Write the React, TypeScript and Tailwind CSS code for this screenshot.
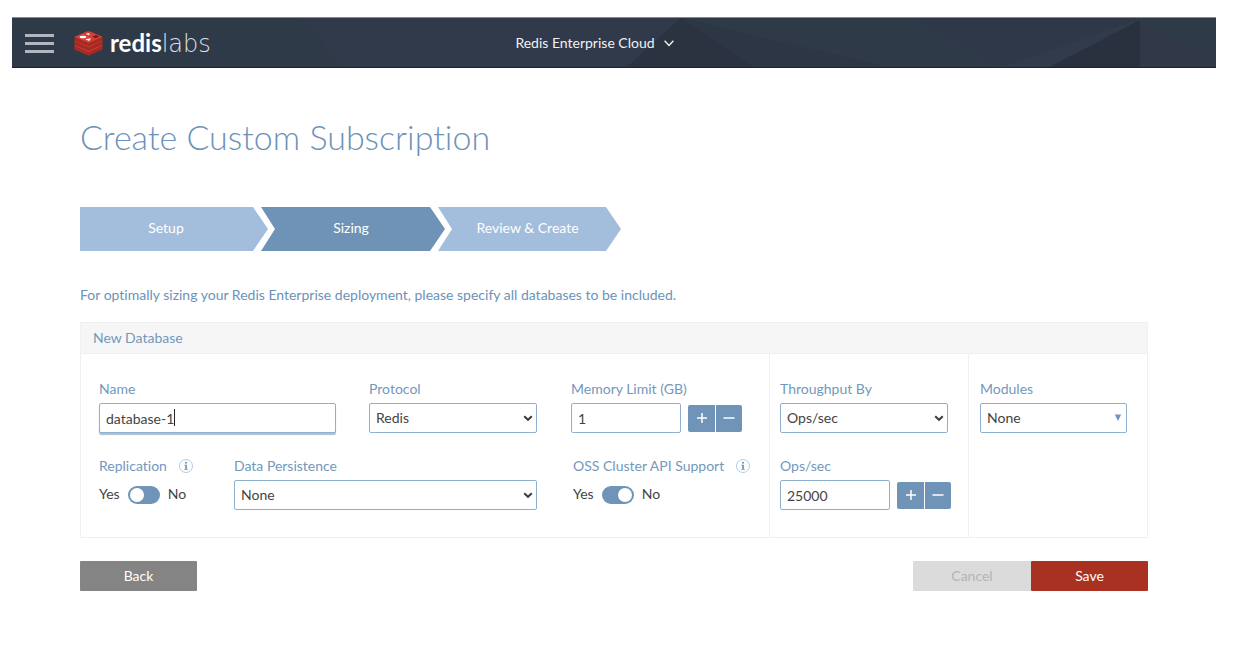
import { useState, type ReactNode } from "react";

const controlClass =
  "h-[30px] w-full rounded-[2px] border border-[#8fb0cf] bg-white px-[6px] text-[14px] leading-5 text-[#444] outline-none";

function InfoIcon({ label }: { label: string }) {
  return (
    <svg role="img" aria-label={label} className="h-[14px] w-[14px] shrink-0" viewBox="0 0 14 14" fill="none">
      <circle cx="7" cy="7" r="6.5" stroke="#b4cae0" />
      <circle cx="7" cy="3.8" r="1.05" fill="#6a93b8" />
      <path d="M5.3 5.8H7.9V10H8.9V10.8H5.2V10H6.2V6.6H5.3Z" fill="#6a93b8" />
    </svg>
  );
}

function Field({ id, label, info, className, children }: { id: string; label: string; info?: string; className: string; children: ReactNode }) {
  return (
    <div className={className}>
      <div className="mb-1 flex h-5 items-center gap-3">
        <label htmlFor={id} className="whitespace-nowrap text-[#7398bc]">
          {label}
        </label>
        {info && <InfoIcon label={info} />}
      </div>
      {children}
    </div>
  );
}

function Select({ id, options, triangle = false }: { id: string; options: string[]; triangle?: boolean }) {
  return (
    <div className="relative">
      <select id={id} className={controlClass + " appearance-none"}>
        {options.map((option) => (
          <option key={option}>{option}</option>
        ))}
      </select>
      {triangle ? (
        <svg className="pointer-events-none absolute top-[11px] right-[5px] h-2 w-2" viewBox="0 0 8 8" aria-hidden="true">
          <path d="M0.8 0.5H7.2L4 7Z" fill="#6f98c2" />
        </svg>
      ) : (
        <svg className="pointer-events-none absolute top-3 right-1 h-[7px] w-[10px]" viewBox="0 0 10 7" fill="none" aria-hidden="true">
          <path d="M1.2 1.2L5 4.8L8.8 1.2" stroke="#3d3d3d" strokeWidth="2" />
        </svg>
      )}
    </div>
  );
}

function Stepper({ id, initial, step }: { id: string; initial: number; step: number }) {
  const [value, setValue] = useState(initial);
  const buttonClass = "flex h-[27px] w-[27px] items-center justify-center bg-[#7094b7] text-white";
  return (
    <div className="flex items-center gap-[7px]">
      <div className="w-[110px]">
        <input
          id={id}
          inputMode="numeric"
          className={controlClass}
          value={value}
          onChange={(event) => setValue(Number(event.target.value) || 0)}
        />
      </div>
      <div className="flex">
        <button type="button" aria-label="Increase" className={buttonClass + " rounded-l-[2px]"} onClick={() => setValue(value + step)}>
          <svg className="h-3 w-3" viewBox="0 0 12 12" aria-hidden="true">
            <path d="M6 1V11M1 6H11" stroke="currentColor" strokeWidth="1.5" />
          </svg>
        </button>
        <button
          type="button"
          aria-label="Decrease"
          className={buttonClass + " rounded-r-[2px] border-l border-white"}
          onClick={() => setValue(Math.max(0, value - step))}
        >
          <svg className="h-3 w-3" viewBox="0 0 12 12" aria-hidden="true">
            <path d="M0.5 6H11.5" stroke="currentColor" strokeWidth="1.5" />
          </svg>
        </button>
      </div>
    </div>
  );
}

function Toggle({ id, defaultChecked = false }: { id: string; defaultChecked?: boolean }) {
  return (
    <div className="flex h-7 items-center text-[#444]">
      <span>Yes</span>
      <input
        id={id}
        type="checkbox"
        role="switch"
        defaultChecked={defaultChecked}
        className="mx-2 mt-[2px] flex h-[18px] w-8 appearance-none items-center rounded-full bg-[#7094b7] px-[2px] before:h-[14px] before:w-[14px] before:rounded-full before:bg-white before:content-[''] checked:justify-end"
      />
      <span>No</span>
    </div>
  );
}

function RedisMark() {
  return (
    <svg className="h-[25px] w-[29px]" viewBox="0 0 29 25" aria-hidden="true">
      <path d="M0.4 14.5V18.4L14.5 24.7L28.6 18.4V14.5Z" fill="#a52a24" />
      <path d="M0.4 14.5L14.5 20.9L28.6 14.5L14.5 8.7Z" fill="#d63f35" />
      <path d="M0.4 10V13.8L14.5 20L28.6 13.8V10Z" fill="#a52a24" />
      <path d="M0.4 10L14.5 16.3L28.6 10L14.5 4.2Z" fill="#d63f35" />
      <path d="M0.4 6V9.5L14.5 15.6L28.6 9.5V6Z" fill="#a52a24" />
      <path d="M0.4 5.8L12.8 0.6Q14.5 0 16.2 0.6L28.6 5.8L14.5 12Z" fill="#d63f35" />
      <path d="M12.4 2.2L14 2.5L15.4 1.9L15.2 2.9L16.8 3.3L14.9 3.6L14.2 4.5L13.5 3.5L11.7 3.2L12.8 2.9Z" fill="#fff" />
      <ellipse cx="9" cy="6" rx="3.3" ry="1.3" fill="#fff" />
      <path d="M11.2 8.3L17 7.3L15.1 9.9Z" fill="#fff" />
      <path d="M18.2 5.7L22 4.1L25.4 5.6L21.8 7.2Z" fill="#7d1a16" />
    </svg>
  );
}

function Header() {
  return (
    <header className="relative grid h-[51px] grid-cols-[1fr_auto_1fr] items-center border-t border-b border-t-[#7d8a9e] border-b-[#1c2233] bg-[#2f3a49] pt-px pr-[52px] pl-[13px]">
      <svg className="absolute inset-0 h-full w-full" viewBox="0 0 1204 48" preserveAspectRatio="none" aria-hidden="true">
        <path d="M290 0H669L615 48H330Z" fill="#303a4a" />
        <path d="M669 0L875 48H615Z" fill="#2d3644" />
        <path d="M669 0L742 48H615Z" fill="#2b3340" />
        <path d="M900 0H1128L988 48Z" fill="#2f3848" />
        <path d="M1128 2L988 48H1038Z" fill="#313b4c" />
        <path d="M1128 2V48H1038Z" fill="#29303e" />
        <path d="M1128 2L1204 46V48H1128Z" fill="#313949" />
      </svg>
      <div className="relative flex items-center">
        <button type="button" aria-label="Open menu" className="flex w-[29px] flex-col gap-[5px]">
          <span className="h-[3px] w-full bg-[#b2b6bf]" />
          <span className="h-[3px] w-full bg-[#b2b6bf]" />
          <span className="h-[3px] w-full bg-[#b2b6bf]" />
        </button>
        <a href="#home" className="ml-5 flex items-center gap-[7px] text-[24px] leading-7 text-white">
          <RedisMark />
          <span className="flex items-baseline">
            <span className="font-bold">redis</span>
            <span className="font-['DejaVu_Sans',sans-serif] font-extralight text-[#dcdfe4]">labs</span>
          </span>
        </a>
      </div>
      <button type="button" className="relative flex items-center gap-[9px] text-[14px] leading-5 text-[#eff1f3]">
        Redis Enterprise Cloud
        <svg className="h-[7px] w-[10px]" viewBox="0 0 10 7" fill="none" aria-hidden="true">
          <path d="M0.6 0.8L5 5.4L9.4 0.8" stroke="currentColor" strokeWidth="1.4" />
        </svg>
      </button>
    </header>
  );
}

export default function App() {
  return (
    <div className="bg-white pt-[17px] pb-20 font-['Lato',sans-serif] text-[14px] leading-5 [font-variant-ligatures:none]">
      <div className="mr-[26px] ml-3">
        <Header />
      </div>
      <main className="pr-[94px] pl-20">
        <h1 className="mt-12 text-[34px] leading-[42px] font-light text-[#6c92b8]">Create Custom Subscription</h1>

        <ol className="mt-[49px] flex h-11 text-center leading-[42px] text-white">
          <li className="w-[188px] bg-[#a3bddc] pr-4 [clip-path:polygon(0_0,calc(100%-15px)_0,100%_50%,calc(100%-15px)_100%,0_100%)]">
            Setup
          </li>
          <li
            aria-current="step"
            className="-ml-[7px] w-[184px] bg-[#6e93b6] pr-1 [clip-path:polygon(0_0,calc(100%-15px)_0,100%_50%,calc(100%-15px)_100%,0_100%,14px_50%)]"
          >
            Sizing
          </li>
          <li className="-ml-[7px] w-[183px] bg-[#a3bddc] pr-1 [clip-path:polygon(0_0,calc(100%-15px)_0,100%_50%,calc(100%-15px)_100%,0_100%,14px_50%)]">
            Review &amp; Create
          </li>
        </ol>

        <p className="mt-[34px] text-[#6c92b8]">For optimally sizing your Redis Enterprise deployment, please specify all databases to be included.</p>

        <form onSubmit={(event) => event.preventDefault()}>
          <section className="mt-[17px] border border-[#f0f0f0]">
            <h2 className="border-b border-[#f0f0f0] bg-[#f6f6f6] px-3 py-[5px] text-[#7398bc]">New Database</h2>
            <div className="grid grid-cols-[1fr_199px_179px]">
              <div className="flex pt-[25px] pb-[27px] pl-[18px]">
                <div className="flex flex-1 flex-col gap-[23px]">
                  <div className="flex gap-[33px]">
                    <Field id="name" label="Name" className="flex-1">
                      <div className="relative">
                        <input id="name" defaultValue="database-1" className={controlClass + " shadow-[0_2px_1px_#a9bfd3] caret-transparent"} />
                        <span className="pointer-events-none absolute top-[6px] left-[7px] flex">
                          <span className="invisible" aria-hidden="true">
                            database-1
                          </span>
                          <span className="h-[17px] w-px bg-[#222]" />
                        </span>
                      </div>
                    </Field>
                    <Field id="protocol" label="Protocol" className="w-[168px]">
                      <Select id="protocol" options={["Redis", "Memcached"]} />
                    </Field>
                  </div>
                  <div className="flex">
                    <Field id="replication" label="Replication" info="About replication" className="w-[135px]">
                      <Toggle id="replication" />
                    </Field>
                    <Field id="persistence" label="Data Persistence" className="flex-1">
                      <Select id="persistence" options={["None", "Snapshot"]} />
                    </Field>
                  </div>
                </div>
                <div className="flex w-[232px] flex-col gap-[23px] pl-[34px]">
                  <Field id="memory" label="Memory Limit (GB)" className="w-full">
                    <Stepper id="memory" initial={1} step={1} />
                  </Field>
                  <Field id="oss" label="OSS Cluster API Support" info="About OSS Cluster API support" className="w-full pl-[2px]">
                    <Toggle id="oss" defaultChecked />
                  </Field>
                </div>
              </div>
              <div className="flex flex-col gap-[23px] border-l border-[#f0f0f0] pt-[25px] pl-[10px]">
                <Field id="throughput" label="Throughput By" className="w-[168px]">
                  <Select id="throughput" options={["Ops/sec", "Number of shards"]} />
                </Field>
                <Field id="ops" label="Ops/sec" className="w-full">
                  <Stepper id="ops" initial={25000} step={1000} />
                </Field>
              </div>
              <div className="border-l border-[#f0f0f0] pt-[25px] pl-[11px]">
                <Field id="modules" label="Modules" className="w-[147px]">
                  <Select id="modules" options={["None", "RediSearch"]} triangle />
                </Field>
              </div>
            </div>
          </section>

          <div className="mt-[23px] flex text-[14px] text-white">
            <button type="button" className="h-[30px] w-[117px] rounded-[1px] bg-[#848484]">
              Back
            </button>
            <button type="button" disabled className="ml-auto h-[30px] w-[118px] rounded-[1px] bg-[#dbdbdb] text-[#b5b5b5]">
              Cancel
            </button>
            <button type="submit" className="h-[30px] w-[117px] rounded-[1px] bg-[#a83122]">
              Save
            </button>
          </div>
        </form>
      </main>
    </div>
  );
}
